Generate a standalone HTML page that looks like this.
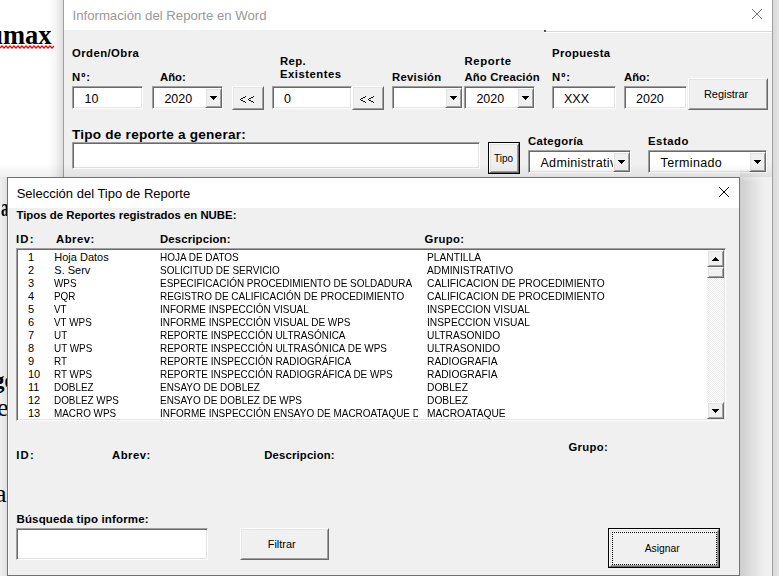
<!DOCTYPE html>
<html><head><meta charset="utf-8"><style>
html,body{margin:0;padding:0;width:779px;height:576px;overflow:hidden;position:relative;background:#fff;font-family:"Liberation Sans", sans-serif}
.t{position:absolute;white-space:pre;font-family:"Liberation Sans", sans-serif}
</style></head><body>
<div style="position:absolute;left:0;top:0;width:779px;height:576px;background:#fff"></div>
<div style="position:absolute;left:-56px;top:15px;font-family:'Liberation Serif',serif;font-weight:700;font-size:26.5px;line-height:40px;color:#000;white-space:pre">Documax</div>
<svg style="position:absolute;left:0;top:0" width="60" height="60"><path d="M0 48L2 46L4 48L6 46L8 48L10 46L12 48L14 46L16 48L18 46L20 48L22 46L24 48L26 46L28 48L30 46L32 48L34 46L36 48L38 46L40 48L42 46L44 48L46 46L48 48L50 46L52 48L54 46" stroke="#f00" stroke-width="1.3" fill="none"/></svg>
<div style="position:absolute;left:0.5px;top:195.06px;font-family:'Liberation Serif',serif;font-weight:700;font-size:25px;line-height:25px;color:#000;white-space:pre;transform:scaleX(0.62);transform-origin:0 0">a</div>
<div style="position:absolute;left:-7px;top:368.74px;font-family:'Liberation Serif',serif;font-weight:700;font-size:23px;line-height:23px;color:#000;white-space:pre;">ge</div>
<div style="position:absolute;left:-3px;top:394.73px;font-family:'Liberation Serif',serif;font-weight:400;font-size:26px;line-height:26px;color:#000;white-space:pre;">e</div>
<div style="position:absolute;left:-5px;top:480.73px;font-family:'Liberation Serif',serif;font-weight:400;font-size:26px;line-height:26px;color:#000;white-space:pre;">a</div>
<div style="position:absolute;left:48px;top:0px;width:15px;height:576px;box-sizing:border-box;background:linear-gradient(to right, rgba(0,0,0,0) 0%, rgba(0,0,0,0.04) 50%, rgba(0,0,0,0.13) 100%)"></div>
<div style="position:absolute;left:773px;top:0px;width:6px;height:576px;box-sizing:border-box;background:linear-gradient(to right, rgba(0,0,0,0.15), rgba(0,0,0,0.10))"></div>
<div style="position:absolute;left:63px;top:-1px;width:710px;height:600px;box-sizing:border-box;background:#f0f0f0;border:1px solid #a0a0a0"></div>
<div style="position:absolute;left:64px;top:0px;width:708px;height:30px;box-sizing:border-box;background:#fff"></div>
<div class="t" style="left:72.5px;top:9.13px;font-size:13.2px;line-height:13.2px;font-weight:400;color:#999;">Información del Reporte en Word</div>
<svg style="position:absolute;left:751.0px;top:8.0px" width="12" height="12"><path d="M1 1L11 11M11 1L1 11" stroke="#777" stroke-width="1" fill="none"/></svg>
<div style="position:absolute;left:544px;top:30px;width:228px;height:1px;box-sizing:border-box;background:#fff"></div>
<div style="position:absolute;left:544px;top:31px;width:228px;height:1px;box-sizing:border-box;background:#d8d8d8"></div>
<div style="position:absolute;left:544px;top:32px;width:228px;height:1px;box-sizing:border-box;background:#fff"></div>
<div style="position:absolute;left:544px;top:30px;width:2px;height:2px;box-sizing:border-box;background:#555"></div>
<div class="t" style="left:72px;top:48.43px;font-size:11.3px;line-height:11.3px;font-weight:700;color:#000;letter-spacing:0.45px">Orden/Obra</div>
<div class="t" style="left:72px;top:72.43px;font-size:11.3px;line-height:11.3px;font-weight:700;color:#000;letter-spacing:1px">Nº:</div>
<div class="t" style="left:160px;top:72.43px;font-size:11.3px;line-height:11.3px;font-weight:700;color:#000;">Año:</div>
<div class="t" style="left:280px;top:56.43px;font-size:11.3px;line-height:11.3px;font-weight:700;color:#000;letter-spacing:0.4px">Rep.</div>
<div class="t" style="left:280px;top:69.43px;font-size:11.3px;line-height:11.3px;font-weight:700;color:#000;letter-spacing:0.5px">Existentes</div>
<div class="t" style="left:392px;top:72.43px;font-size:11.3px;line-height:11.3px;font-weight:700;color:#000;letter-spacing:0.3px">Revisión</div>
<div class="t" style="left:464.5px;top:56.43px;font-size:11.3px;line-height:11.3px;font-weight:700;color:#000;letter-spacing:0.65px">Reporte</div>
<div class="t" style="left:464.5px;top:72.43px;font-size:11.3px;line-height:11.3px;font-weight:700;color:#000;letter-spacing:0.15px">Año Creación</div>
<div class="t" style="left:552px;top:48.43px;font-size:11.3px;line-height:11.3px;font-weight:700;color:#000;letter-spacing:0.35px">Propuesta</div>
<div class="t" style="left:552px;top:72.43px;font-size:11.3px;line-height:11.3px;font-weight:700;color:#000;letter-spacing:1px">Nº:</div>
<div class="t" style="left:624px;top:72.43px;font-size:11.3px;line-height:11.3px;font-weight:700;color:#000;">Año:</div>
<div style="position:absolute;left:72px;top:86px;width:71px;height:23px;box-sizing:border-box;background:#fff;border:1px solid;border-color:#a0a0a0 #fff #fff #a0a0a0;box-shadow:inset 1px 1px 0 #696969, inset -1px -1px 0 #e3e3e3"></div>
<div class="t" style="left:84.5px;top:93.22px;font-size:12.5px;line-height:12.5px;font-weight:400;color:#000;">10</div>
<div style="position:absolute;left:152px;top:86px;width:71px;height:23px;box-sizing:border-box;background:#fff;border:1px solid;border-color:#a0a0a0 #fff #fff #a0a0a0;box-shadow:inset 1px 1px 0 #696969, inset -1px -1px 0 #e3e3e3"></div>
<div style="position:absolute;left:205px;top:88px;width:17px;height:20px;box-sizing:border-box;background:#f0f0f0;border:1px solid;border-color:#fff #696969 #696969 #fff;box-shadow:inset 1px 1px 0 #e3e3e3, inset -1px -1px 0 #a0a0a0"></div>
<svg style="position:absolute;left:210px;top:96px" width="7" height="4" shape-rendering="crispEdges"><path d="M0 0h7v1h-1v1h-1v1h-1v1h-1v-1h-1v-1h-1v-1h-1z" fill="#000"/></svg>
<div class="t" style="left:164.4px;top:92.92px;font-size:12.5px;line-height:12.5px;font-weight:400;color:#000;">2020</div>
<div style="position:absolute;left:232px;top:86px;width:32px;height:24px;box-sizing:border-box;background:#f0f0f0;border:1px solid;border-color:#fff #696969 #696969 #fff;box-shadow:inset 1px 1px 0 #e3e3e3, inset -1px -1px 0 #a0a0a0"></div>
<svg style="position:absolute;left:240px;top:96px" width="14" height="7" shape-rendering="crispEdges"><path d="M5 0h1v1h-1zM3 1h1v1h-1zM4 1h1v1h-1zM1 2h1v1h-1zM2 2h1v1h-1zM0 3h1v1h-1zM1 4h1v1h-1zM2 4h1v1h-1zM3 5h1v1h-1zM4 5h1v1h-1zM5 6h1v1h-1zM13 0h1v1h-1zM11 1h1v1h-1zM12 1h1v1h-1zM9 2h1v1h-1zM10 2h1v1h-1zM8 3h1v1h-1zM9 4h1v1h-1zM10 4h1v1h-1zM11 5h1v1h-1zM12 5h1v1h-1zM13 6h1v1h-1z" fill="#111"/></svg>
<div style="position:absolute;left:272px;top:86px;width:80px;height:23px;box-sizing:border-box;background:#fff;border:1px solid;border-color:#a0a0a0 #fff #fff #a0a0a0;box-shadow:inset 1px 1px 0 #696969, inset -1px -1px 0 #e3e3e3"></div>
<div class="t" style="left:284px;top:93.22px;font-size:12.5px;line-height:12.5px;font-weight:400;color:#000;">0</div>
<div style="position:absolute;left:352px;top:86px;width:32px;height:24px;box-sizing:border-box;background:#f0f0f0;border:1px solid;border-color:#fff #696969 #696969 #fff;box-shadow:inset 1px 1px 0 #e3e3e3, inset -1px -1px 0 #a0a0a0"></div>
<svg style="position:absolute;left:360px;top:96px" width="14" height="7" shape-rendering="crispEdges"><path d="M5 0h1v1h-1zM3 1h1v1h-1zM4 1h1v1h-1zM1 2h1v1h-1zM2 2h1v1h-1zM0 3h1v1h-1zM1 4h1v1h-1zM2 4h1v1h-1zM3 5h1v1h-1zM4 5h1v1h-1zM5 6h1v1h-1zM13 0h1v1h-1zM11 1h1v1h-1zM12 1h1v1h-1zM9 2h1v1h-1zM10 2h1v1h-1zM8 3h1v1h-1zM9 4h1v1h-1zM10 4h1v1h-1zM11 5h1v1h-1zM12 5h1v1h-1zM13 6h1v1h-1z" fill="#111"/></svg>
<div style="position:absolute;left:392px;top:86px;width:71px;height:23px;box-sizing:border-box;background:#fff;border:1px solid;border-color:#a0a0a0 #fff #fff #a0a0a0;box-shadow:inset 1px 1px 0 #696969, inset -1px -1px 0 #e3e3e3"></div>
<div style="position:absolute;left:445px;top:88px;width:17px;height:20px;box-sizing:border-box;background:#f0f0f0;border:1px solid;border-color:#fff #696969 #696969 #fff;box-shadow:inset 1px 1px 0 #e3e3e3, inset -1px -1px 0 #a0a0a0"></div>
<svg style="position:absolute;left:450px;top:96px" width="7" height="4" shape-rendering="crispEdges"><path d="M0 0h7v1h-1v1h-1v1h-1v1h-1v-1h-1v-1h-1v-1h-1z" fill="#000"/></svg>
<div style="position:absolute;left:464px;top:86px;width:71px;height:23px;box-sizing:border-box;background:#fff;border:1px solid;border-color:#a0a0a0 #fff #fff #a0a0a0;box-shadow:inset 1px 1px 0 #696969, inset -1px -1px 0 #e3e3e3"></div>
<div style="position:absolute;left:517px;top:88px;width:17px;height:20px;box-sizing:border-box;background:#f0f0f0;border:1px solid;border-color:#fff #696969 #696969 #fff;box-shadow:inset 1px 1px 0 #e3e3e3, inset -1px -1px 0 #a0a0a0"></div>
<svg style="position:absolute;left:522px;top:96px" width="7" height="4" shape-rendering="crispEdges"><path d="M0 0h7v1h-1v1h-1v1h-1v1h-1v-1h-1v-1h-1v-1h-1z" fill="#000"/></svg>
<div class="t" style="left:476.4px;top:92.92px;font-size:12.5px;line-height:12.5px;font-weight:400;color:#000;">2020</div>
<div style="position:absolute;left:552px;top:86px;width:64px;height:23px;box-sizing:border-box;background:#fff;border:1px solid;border-color:#a0a0a0 #fff #fff #a0a0a0;box-shadow:inset 1px 1px 0 #696969, inset -1px -1px 0 #e3e3e3"></div>
<div class="t" style="left:564px;top:93.22px;font-size:12.5px;line-height:12.5px;font-weight:400;color:#000;">XXX</div>
<div style="position:absolute;left:624px;top:86px;width:63px;height:23px;box-sizing:border-box;background:#fff;border:1px solid;border-color:#a0a0a0 #fff #fff #a0a0a0;box-shadow:inset 1px 1px 0 #696969, inset -1px -1px 0 #e3e3e3"></div>
<div class="t" style="left:636px;top:93.22px;font-size:12.5px;line-height:12.5px;font-weight:400;color:#000;">2020</div>
<div style="position:absolute;left:688px;top:78px;width:80px;height:32px;box-sizing:border-box;background:#f0f0f0;border:1px solid;border-color:#fff #696969 #696969 #fff;box-shadow:inset 1px 1px 0 #e3e3e3, inset -1px -1px 0 #a0a0a0"></div>
<div class="t" style="left:704px;top:88.77px;font-size:10.9px;line-height:10.9px;font-weight:400;color:#000;">Registrar</div>
<div class="t" style="left:72px;top:128.29px;font-size:13.6px;line-height:13.6px;font-weight:700;color:#000;letter-spacing:0.22px">Tipo de reporte a generar:</div>
<div style="position:absolute;left:72px;top:142px;width:408px;height:27px;box-sizing:border-box;background:#fff;border:1px solid;border-color:#a0a0a0 #fff #fff #a0a0a0;box-shadow:inset 1px 1px 0 #696969, inset -1px -1px 0 #e3e3e3"></div>
<div style="position:absolute;left:488px;top:142px;width:32px;height:32px;box-sizing:border-box;border:1px solid #000"></div>
<div style="position:absolute;left:489px;top:143px;width:30px;height:30px;box-sizing:border-box;background:#f0f0f0;border:1px solid;border-color:#fff #696969 #696969 #fff;box-shadow:inset 1px 1px 0 #e3e3e3, inset -1px -1px 0 #a0a0a0"></div>
<div class="t" style="left:494px;top:153.53px;font-size:10px;line-height:10px;font-weight:400;color:#000;">Tipo</div>
<div class="t" style="left:528px;top:135.73px;font-size:11.3px;line-height:11.3px;font-weight:700;color:#000;letter-spacing:0.35px">Categoría</div>
<div class="t" style="left:648px;top:136.13px;font-size:11.3px;line-height:11.3px;font-weight:700;color:#000;letter-spacing:0.55px">Estado</div>
<div style="position:absolute;left:528px;top:150px;width:103px;height:23px;box-sizing:border-box;background:#fff;border:1px solid;border-color:#a0a0a0 #fff #fff #a0a0a0;box-shadow:inset 1px 1px 0 #696969, inset -1px -1px 0 #e3e3e3"></div>
<div style="position:absolute;left:613px;top:152px;width:17px;height:20px;box-sizing:border-box;background:#f0f0f0;border:1px solid;border-color:#fff #696969 #696969 #fff;box-shadow:inset 1px 1px 0 #e3e3e3, inset -1px -1px 0 #a0a0a0"></div>
<svg style="position:absolute;left:618px;top:160px" width="7" height="4" shape-rendering="crispEdges"><path d="M0 0h7v1h-1v1h-1v1h-1v1h-1v-1h-1v-1h-1v-1h-1z" fill="#000"/></svg>
<div style="position:absolute;left:530px;top:152px;width:83px;height:19px;overflow:hidden">
<div class="t" style="left:10.4px;top:5.42px;font-size:12.5px;line-height:12.5px;font-weight:400;color:#000;letter-spacing:0.35px">Administrativo</div>
</div>
<div style="position:absolute;left:648px;top:150px;width:119px;height:23px;box-sizing:border-box;background:#fff;border:1px solid;border-color:#a0a0a0 #fff #fff #a0a0a0;box-shadow:inset 1px 1px 0 #696969, inset -1px -1px 0 #e3e3e3"></div>
<div style="position:absolute;left:749px;top:152px;width:17px;height:20px;box-sizing:border-box;background:#f0f0f0;border:1px solid;border-color:#fff #696969 #696969 #fff;box-shadow:inset 1px 1px 0 #e3e3e3, inset -1px -1px 0 #a0a0a0"></div>
<svg style="position:absolute;left:754px;top:160px" width="7" height="4" shape-rendering="crispEdges"><path d="M0 0h7v1h-1v1h-1v1h-1v1h-1v-1h-1v-1h-1v-1h-1z" fill="#000"/></svg>
<div class="t" style="left:660.6px;top:156.82px;font-size:12.5px;line-height:12.5px;font-weight:400;color:#000;letter-spacing:0.35px">Terminado</div>
<div style="position:absolute;left:0px;top:163px;width:772px;height:14px;box-sizing:border-box;background:linear-gradient(to bottom, rgba(0,0,0,0), rgba(0,0,0,0.06))"></div>
<div style="position:absolute;left:0px;top:177px;width:7px;height:399px;box-sizing:border-box;background:linear-gradient(to right, rgba(0,0,0,0.06), rgba(0,0,0,0.12))"></div>
<div style="position:absolute;left:740px;top:168px;width:24px;height:408px;box-sizing:border-box;background:linear-gradient(to right, rgba(0,0,0,0.14), rgba(0,0,0,0));-webkit-mask-image:linear-gradient(to bottom, transparent 0px, #000 14px)"></div>
<div style="position:absolute;left:7px;top:177px;width:733px;height:399px;box-sizing:border-box;background:#f0f0f0;border:1px solid #707070;box-shadow:inset 1px 0 0 #f9f9f9"></div>
<div style="position:absolute;left:8px;top:178px;width:731px;height:30px;box-sizing:border-box;background:#fff"></div>
<div class="t" style="left:16.7px;top:187.00px;font-size:13px;line-height:13px;font-weight:400;color:#000;">Selección del Tipo de Reporte</div>
<svg style="position:absolute;left:718.0px;top:186.0px" width="12" height="12"><path d="M1 1L11 11M11 1L1 11" stroke="#000" stroke-width="1" fill="none"/></svg>
<div class="t" style="left:16.4px;top:209.85px;font-size:11.4px;line-height:11.4px;font-weight:700;color:#000;">Tipos de Reportes registrados en NUBE:</div>
<div class="t" style="left:16px;top:234.13px;font-size:11.3px;line-height:11.3px;font-weight:700;color:#000;letter-spacing:1.2px">ID:</div>
<div class="t" style="left:56px;top:234.13px;font-size:11.3px;line-height:11.3px;font-weight:700;color:#000;letter-spacing:0.5px">Abrev:</div>
<div class="t" style="left:160px;top:234.13px;font-size:11.3px;line-height:11.3px;font-weight:700;color:#000;letter-spacing:0.18px">Descripcion:</div>
<div class="t" style="left:424.6px;top:234.13px;font-size:11.3px;line-height:11.3px;font-weight:700;color:#000;letter-spacing:0.35px">Grupo:</div>
<div style="position:absolute;left:16px;top:248px;width:710px;height:173px;box-sizing:border-box;background:#fff;border:1px solid;border-color:#a0a0a0 #fff #fff #a0a0a0;box-shadow:inset 1px 1px 0 #696969, inset -1px -1px 0 #e3e3e3"></div>
<div style="position:absolute;left:18px;top:250px;width:689px;height:169px;overflow:hidden">
<div class="t" style="left:10px;top:2.29px;font-size:11px;line-height:11px;font-weight:400;color:#000;">1</div>
<div class="t" style="left:36.3px;top:2.29px;font-size:11px;line-height:11px;font-weight:400;color:#000;">Hoja Datos</div>
<div style="position:absolute;left:141.5px;top:0;width:258.5px;height:169px;overflow:hidden">
<div class="t" style="left:0px;top:2.29px;font-size:11px;line-height:11px;font-weight:400;color:#000;transform:scaleX(0.905);transform-origin:0 0">HOJA DE DATOS</div>
</div>
<div class="t" style="left:409.4px;top:2.29px;font-size:11px;line-height:11px;font-weight:400;color:#000;transform:scaleX(0.93);transform-origin:0 0">PLANTILLA</div>
<div class="t" style="left:10px;top:15.29px;font-size:11px;line-height:11px;font-weight:400;color:#000;">2</div>
<div class="t" style="left:36.3px;top:15.29px;font-size:11px;line-height:11px;font-weight:400;color:#000;">S. Serv</div>
<div style="position:absolute;left:141.5px;top:0;width:258.5px;height:169px;overflow:hidden">
<div class="t" style="left:0px;top:15.29px;font-size:11px;line-height:11px;font-weight:400;color:#000;transform:scaleX(0.905);transform-origin:0 0">SOLICITUD DE SERVICIO</div>
</div>
<div class="t" style="left:409.4px;top:15.29px;font-size:11px;line-height:11px;font-weight:400;color:#000;transform:scaleX(0.93);transform-origin:0 0">ADMINISTRATIVO</div>
<div class="t" style="left:10px;top:28.29px;font-size:11px;line-height:11px;font-weight:400;color:#000;">3</div>
<div class="t" style="left:36.3px;top:28.29px;font-size:11px;line-height:11px;font-weight:400;color:#000;transform:scaleX(0.9);transform-origin:0 0">WPS</div>
<div style="position:absolute;left:141.5px;top:0;width:258.5px;height:169px;overflow:hidden">
<div class="t" style="left:0px;top:28.29px;font-size:11px;line-height:11px;font-weight:400;color:#000;transform:scaleX(0.905);transform-origin:0 0">ESPECIFICACIÓN PROCEDIMIENTO DE SOLDADURA</div>
</div>
<div class="t" style="left:409.4px;top:28.29px;font-size:11px;line-height:11px;font-weight:400;color:#000;transform:scaleX(0.93);transform-origin:0 0">CALIFICACION DE PROCEDIMIENTO</div>
<div class="t" style="left:10px;top:41.29px;font-size:11px;line-height:11px;font-weight:400;color:#000;">4</div>
<div class="t" style="left:36.3px;top:41.29px;font-size:11px;line-height:11px;font-weight:400;color:#000;transform:scaleX(0.9);transform-origin:0 0">PQR</div>
<div style="position:absolute;left:141.5px;top:0;width:258.5px;height:169px;overflow:hidden">
<div class="t" style="left:0px;top:41.29px;font-size:11px;line-height:11px;font-weight:400;color:#000;transform:scaleX(0.905);transform-origin:0 0">REGISTRO DE CALIFICACIÓN DE PROCEDIMIENTO</div>
</div>
<div class="t" style="left:409.4px;top:41.29px;font-size:11px;line-height:11px;font-weight:400;color:#000;transform:scaleX(0.93);transform-origin:0 0">CALIFICACION DE PROCEDIMIENTO</div>
<div class="t" style="left:10px;top:54.29px;font-size:11px;line-height:11px;font-weight:400;color:#000;">5</div>
<div class="t" style="left:36.3px;top:54.29px;font-size:11px;line-height:11px;font-weight:400;color:#000;transform:scaleX(0.9);transform-origin:0 0">VT</div>
<div style="position:absolute;left:141.5px;top:0;width:258.5px;height:169px;overflow:hidden">
<div class="t" style="left:0px;top:54.29px;font-size:11px;line-height:11px;font-weight:400;color:#000;transform:scaleX(0.905);transform-origin:0 0">INFORME INSPECCIÓN VISUAL</div>
</div>
<div class="t" style="left:409.4px;top:54.29px;font-size:11px;line-height:11px;font-weight:400;color:#000;transform:scaleX(0.93);transform-origin:0 0">INSPECCION VISUAL</div>
<div class="t" style="left:10px;top:67.29px;font-size:11px;line-height:11px;font-weight:400;color:#000;">6</div>
<div class="t" style="left:36.3px;top:67.29px;font-size:11px;line-height:11px;font-weight:400;color:#000;transform:scaleX(0.9);transform-origin:0 0">VT WPS</div>
<div style="position:absolute;left:141.5px;top:0;width:258.5px;height:169px;overflow:hidden">
<div class="t" style="left:0px;top:67.29px;font-size:11px;line-height:11px;font-weight:400;color:#000;transform:scaleX(0.905);transform-origin:0 0">INFORME INSPECCIÓN VISUAL DE WPS</div>
</div>
<div class="t" style="left:409.4px;top:67.29px;font-size:11px;line-height:11px;font-weight:400;color:#000;transform:scaleX(0.93);transform-origin:0 0">INSPECCION VISUAL</div>
<div class="t" style="left:10px;top:80.29px;font-size:11px;line-height:11px;font-weight:400;color:#000;">7</div>
<div class="t" style="left:36.3px;top:80.29px;font-size:11px;line-height:11px;font-weight:400;color:#000;transform:scaleX(0.9);transform-origin:0 0">UT</div>
<div style="position:absolute;left:141.5px;top:0;width:258.5px;height:169px;overflow:hidden">
<div class="t" style="left:0px;top:80.29px;font-size:11px;line-height:11px;font-weight:400;color:#000;transform:scaleX(0.905);transform-origin:0 0">REPORTE INSPECCIÓN ULTRASÓNICA</div>
</div>
<div class="t" style="left:409.4px;top:80.29px;font-size:11px;line-height:11px;font-weight:400;color:#000;transform:scaleX(0.93);transform-origin:0 0">ULTRASONIDO</div>
<div class="t" style="left:10px;top:93.29px;font-size:11px;line-height:11px;font-weight:400;color:#000;">8</div>
<div class="t" style="left:36.3px;top:93.29px;font-size:11px;line-height:11px;font-weight:400;color:#000;transform:scaleX(0.9);transform-origin:0 0">UT WPS</div>
<div style="position:absolute;left:141.5px;top:0;width:258.5px;height:169px;overflow:hidden">
<div class="t" style="left:0px;top:93.29px;font-size:11px;line-height:11px;font-weight:400;color:#000;transform:scaleX(0.905);transform-origin:0 0">REPORTE INSPECCIÓN ULTRASÓNICA DE WPS</div>
</div>
<div class="t" style="left:409.4px;top:93.29px;font-size:11px;line-height:11px;font-weight:400;color:#000;transform:scaleX(0.93);transform-origin:0 0">ULTRASONIDO</div>
<div class="t" style="left:10px;top:106.29px;font-size:11px;line-height:11px;font-weight:400;color:#000;">9</div>
<div class="t" style="left:36.3px;top:106.29px;font-size:11px;line-height:11px;font-weight:400;color:#000;transform:scaleX(0.9);transform-origin:0 0">RT</div>
<div style="position:absolute;left:141.5px;top:0;width:258.5px;height:169px;overflow:hidden">
<div class="t" style="left:0px;top:106.29px;font-size:11px;line-height:11px;font-weight:400;color:#000;transform:scaleX(0.905);transform-origin:0 0">REPORTE INSPECCIÓN RADIOGRÁFICA</div>
</div>
<div class="t" style="left:409.4px;top:106.29px;font-size:11px;line-height:11px;font-weight:400;color:#000;transform:scaleX(0.93);transform-origin:0 0">RADIOGRAFIA</div>
<div class="t" style="left:10px;top:119.29px;font-size:11px;line-height:11px;font-weight:400;color:#000;">10</div>
<div class="t" style="left:36.3px;top:119.29px;font-size:11px;line-height:11px;font-weight:400;color:#000;transform:scaleX(0.9);transform-origin:0 0">RT WPS</div>
<div style="position:absolute;left:141.5px;top:0;width:258.5px;height:169px;overflow:hidden">
<div class="t" style="left:0px;top:119.29px;font-size:11px;line-height:11px;font-weight:400;color:#000;transform:scaleX(0.905);transform-origin:0 0">REPORTE INSPECCIÓN RADIOGRÁFICA DE WPS</div>
</div>
<div class="t" style="left:409.4px;top:119.29px;font-size:11px;line-height:11px;font-weight:400;color:#000;transform:scaleX(0.93);transform-origin:0 0">RADIOGRAFIA</div>
<div class="t" style="left:10px;top:132.29px;font-size:11px;line-height:11px;font-weight:400;color:#000;">11</div>
<div class="t" style="left:36.3px;top:132.29px;font-size:11px;line-height:11px;font-weight:400;color:#000;transform:scaleX(0.9);transform-origin:0 0">DOBLEZ</div>
<div style="position:absolute;left:141.5px;top:0;width:258.5px;height:169px;overflow:hidden">
<div class="t" style="left:0px;top:132.29px;font-size:11px;line-height:11px;font-weight:400;color:#000;transform:scaleX(0.905);transform-origin:0 0">ENSAYO DE DOBLEZ</div>
</div>
<div class="t" style="left:409.4px;top:132.29px;font-size:11px;line-height:11px;font-weight:400;color:#000;transform:scaleX(0.93);transform-origin:0 0">DOBLEZ</div>
<div class="t" style="left:10px;top:145.29px;font-size:11px;line-height:11px;font-weight:400;color:#000;">12</div>
<div class="t" style="left:36.3px;top:145.29px;font-size:11px;line-height:11px;font-weight:400;color:#000;transform:scaleX(0.9);transform-origin:0 0">DOBLEZ WPS</div>
<div style="position:absolute;left:141.5px;top:0;width:258.5px;height:169px;overflow:hidden">
<div class="t" style="left:0px;top:145.29px;font-size:11px;line-height:11px;font-weight:400;color:#000;transform:scaleX(0.905);transform-origin:0 0">ENSAYO DE DOBLEZ DE WPS</div>
</div>
<div class="t" style="left:409.4px;top:145.29px;font-size:11px;line-height:11px;font-weight:400;color:#000;transform:scaleX(0.93);transform-origin:0 0">DOBLEZ</div>
<div class="t" style="left:10px;top:158.29px;font-size:11px;line-height:11px;font-weight:400;color:#000;">13</div>
<div class="t" style="left:36.3px;top:158.29px;font-size:11px;line-height:11px;font-weight:400;color:#000;transform:scaleX(0.9);transform-origin:0 0">MACRO WPS</div>
<div style="position:absolute;left:141.5px;top:0;width:258.5px;height:169px;overflow:hidden">
<div class="t" style="left:0px;top:158.29px;font-size:11px;line-height:11px;font-weight:400;color:#000;transform:scaleX(0.905);transform-origin:0 0">INFORME INSPECCIÓN ENSAYO DE MACROATAQUE DE WPS</div>
</div>
<div class="t" style="left:409.4px;top:158.29px;font-size:11px;line-height:11px;font-weight:400;color:#000;transform:scaleX(0.93);transform-origin:0 0">MACROATAQUE</div>
</div>
<div style="position:absolute;left:707px;top:250px;width:17px;height:169px;box-sizing:border-box;background-color:#f4f4f4;background-image:repeating-conic-gradient(#ebebeb 0% 25%, #fff 0% 50%);background-size:2px 2px"></div>
<div style="position:absolute;left:707px;top:250px;width:17px;height:17px;box-sizing:border-box;background:#f0f0f0;border:1px solid;border-color:#fff #696969 #696969 #fff;box-shadow:inset 1px 1px 0 #e3e3e3, inset -1px -1px 0 #a0a0a0"></div>
<svg style="position:absolute;left:712px;top:257px" width="7" height="4" shape-rendering="crispEdges"><path d="M3 0h1v1h1v1h1v1h1v1h-7v-1h1v-1h1v-1h1z" fill="#000"/></svg>
<div style="position:absolute;left:707px;top:267px;width:17px;height:11px;box-sizing:border-box;background:#f0f0f0;border:1px solid;border-color:#fff #696969 #696969 #fff;box-shadow:inset 1px 1px 0 #e3e3e3, inset -1px -1px 0 #a0a0a0"></div>
<div style="position:absolute;left:707px;top:402px;width:17px;height:17px;box-sizing:border-box;background:#f0f0f0;border:1px solid;border-color:#fff #696969 #696969 #fff;box-shadow:inset 1px 1px 0 #e3e3e3, inset -1px -1px 0 #a0a0a0"></div>
<svg style="position:absolute;left:712px;top:409px" width="7" height="4" shape-rendering="crispEdges"><path d="M0 0h7v1h-1v1h-1v1h-1v1h-1v-1h-1v-1h-1v-1h-1z" fill="#000"/></svg>
<div class="t" style="left:16.2px;top:450.43px;font-size:11.3px;line-height:11.3px;font-weight:700;color:#000;letter-spacing:1.2px">ID:</div>
<div class="t" style="left:112px;top:450.43px;font-size:11.3px;line-height:11.3px;font-weight:700;color:#000;letter-spacing:0.5px">Abrev:</div>
<div class="t" style="left:264.2px;top:450.13px;font-size:11.3px;line-height:11.3px;font-weight:700;color:#000;letter-spacing:0.18px">Descripcion:</div>
<div class="t" style="left:568.4px;top:441.93px;font-size:11.3px;line-height:11.3px;font-weight:700;color:#000;letter-spacing:0.35px">Grupo:</div>
<div class="t" style="left:16.5px;top:513.77px;font-size:11.5px;line-height:11.5px;font-weight:700;color:#000;letter-spacing:0.14px">Búsqueda tipo informe:</div>
<div style="position:absolute;left:16px;top:528px;width:192px;height:32px;box-sizing:border-box;background:#fff;border:1px solid;border-color:#a0a0a0 #fff #fff #a0a0a0;box-shadow:inset 1px 1px 0 #696969, inset -1px -1px 0 #e3e3e3"></div>
<div style="position:absolute;left:240px;top:528px;width:89px;height:32px;box-sizing:border-box;background:#f0f0f0;border:1px solid;border-color:#fff #696969 #696969 #fff;box-shadow:inset 1px 1px 0 #e3e3e3, inset -1px -1px 0 #a0a0a0"></div>
<div class="t" style="left:267.8px;top:538.77px;font-size:10.9px;line-height:10.9px;font-weight:400;color:#000;">Filtrar</div>
<div style="position:absolute;left:608px;top:528px;width:112px;height:40px;box-sizing:border-box;border:1px solid #000"></div>
<div style="position:absolute;left:609px;top:529px;width:110px;height:38px;box-sizing:border-box;background:#f0f0f0;border:1px solid;border-color:#fff #696969 #696969 #fff;box-shadow:inset 1px 1px 0 #e3e3e3, inset -1px -1px 0 #a0a0a0"></div>
<div style="position:absolute;left:612px;top:532px;width:105px;height:33px;box-sizing:border-box;border:1px dotted #000"></div>
<div class="t" style="left:644.7px;top:543.78px;font-size:10.3px;line-height:10.3px;font-weight:400;color:#000;">Asignar</div>
</body></html>
